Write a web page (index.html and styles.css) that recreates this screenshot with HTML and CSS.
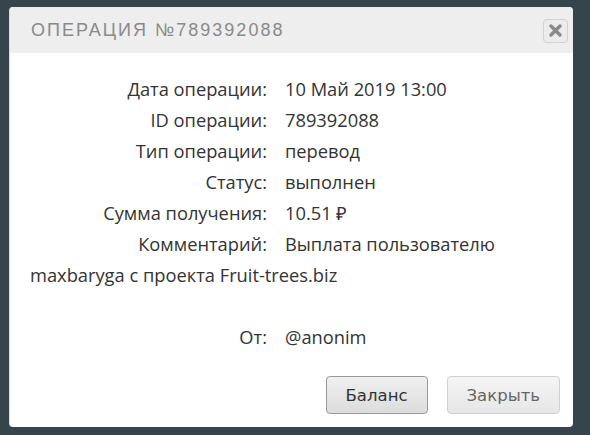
FILE: index.html
```html
<!DOCTYPE html>
<html lang="ru">
<head>
<meta charset="utf-8">
<title>Операция</title>
<link rel="stylesheet" href="styles.css">
</head>
<body>
<div class="dialog">
  <div class="header">
    <span class="title">ОПЕРАЦИЯ №789392088</span>
    <button class="close" aria-label="Закрыть">
      <svg width="13" height="13" viewBox="0 0 13 13"><path d="M2 2 L11 11 M11 2 L2 11" stroke="#8a8a8a" stroke-width="3.4" stroke-linecap="round"/></svg>
    </button>
  </div>
  <div class="body">
    <div class="row"><span class="label">Дата операции:</span>10 Май 2019 13:00</div>
    <div class="row"><span class="label">ID операции:</span>789392088</div>
    <div class="row"><span class="label">Тип операции:</span>перевод</div>
    <div class="row"><span class="label">Статус:</span>выполнен</div>
    <div class="row"><span class="label">Сумма получения:</span>10.51 ₽</div>
    <div class="row"><span class="label">Комментарий:</span>Выплата пользователю maxbaryga с проекта Fruit-trees.biz</div>
    <div class="row empty">&nbsp;</div>
    <div class="row"><span class="label">От:</span>@anonim</div>
  </div>
  <div class="footer">
    <button class="btn primary">Баланс</button>
    <button class="btn">Закрыть</button>
  </div>
</div>
</body>
</html>
```
FILE: styles.css
```css
html, body {
  margin: 0;
  padding: 0;
}
body {
  width: 590px;
  height: 435px;
  background: #36454b;
  overflow: hidden;
  padding: 7px 0 0 9px;
  box-sizing: border-box;
}
.dialog {
  width: 564px;
  height: 420px;
  background: #fff;
  border-radius: 4px;
  border-left: 1px solid #d8dcdd;
  box-sizing: border-box;
  display: flex;
  flex-direction: column;
  overflow: hidden;
}
.header {
  height: 46px;
  background: #eeeeee;
  display: flex;
  align-items: center;
  justify-content: space-between;
  padding: 0 5px 0 21px;
  flex-shrink: 0;
}
.title {
  font-family: "Liberation Sans", sans-serif;
  font-size: 18px;
  letter-spacing: 2px;
  color: #8a8a8a;
  padding-top: 1px;
}
.close {
  width: 25px;
  height: 24px;
  border: 1px solid #d2d2d2;
  border-radius: 4px;
  background: #ececec;
  display: flex;
  align-items: center;
  justify-content: center;
  padding: 0;
  margin-top: 1px;
}
.body {
  padding: 20px 20px 0 20px;
  font-family: "Open Sans", sans-serif;
  font-size: 18.3px;
  line-height: 31px;
  color: #333;
  flex: 1;
}
.label {
  display: inline-block;
  width: 237px;
  text-align: right;
  margin-right: 18px;
}
.footer {
  display: flex;
  justify-content: flex-end;
  gap: 19px;
  padding: 0 13px 13px 0;
}
.btn {
  height: 38px;
  padding: 0 19px;
  font-family: "DejaVu Sans", sans-serif;
  font-size: 16.5px;
  color: #666;
  border: 1px solid #d0d0d0;
  border-radius: 4px;
  background: linear-gradient(#f5f5f5, #e6e6e6);
}
.btn.primary {
  color: #333;
  border-color: #999;
  background: linear-gradient(#f0f0f0, #dcdcdc);
}
```
